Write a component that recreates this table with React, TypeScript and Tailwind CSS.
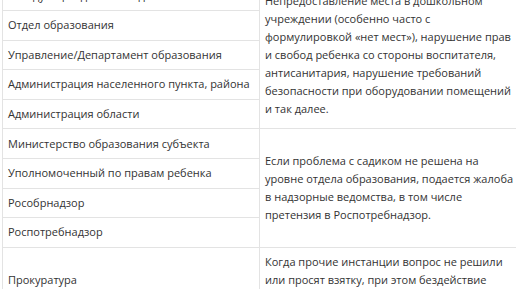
const rows = [
  "Заведующий детским садом",
  "Отдел образования",
  "Управление/Департамент образования",
  "Администрация населенного пункта, района",
  "Администрация области",
  "Министерство образования субъекта",
  "Уполномоченный по правам ребенка",
  "Рособрнадзор",
  "Роспотребнадзор",
  "Прокуратура",
];

const notes: Record<number, { span: number; text: string }> = {
  0: {
    span: 5,
    text: "Непредоставление места в дошкольном учреждении (особенно часто с формулировкой «нет мест»), нарушение прав и свобод ребенка со стороны воспитателя, антисанитария, нарушение требований безопасности при оборудовании помещений и так далее.",
  },
  5: {
    span: 4,
    text: "Если проблема с садиком не решена на уровне отдела образования, подается жалоба в надзорные ведомства, в том числе претензия в Роспотребнадзор.",
  },
  9: {
    span: 1,
    text: "Когда прочие инстанции вопрос не решили или просят взятку, при этом бездействие должностных лиц очевидно.",
  },
};

export default function App() {
  return (
    <div
      className="h-[289px] w-[516px] overflow-hidden bg-white text-[11px] leading-[18px] text-[#333]"
      style={{ fontFamily: "'Open Sans', 'Noto Sans', sans-serif" }}
    >
      <table className="ml-[2px] -mt-[19.6px] w-[520px] table-fixed border-collapse">
        <tbody>
          {rows.map((name, i) => (
            <tr key={name}>
              <td className="w-[257px] border border-[#e3e3e3] px-[5px] py-[5.3px] align-middle">
                {name}
              </td>
              {notes[i] && (
                <td
                  rowSpan={notes[i].span}
                  className="border border-[#e3e3e3] px-[5px] py-[5.3px] align-middle"
                >
                  {notes[i].text}
                </td>
              )}
            </tr>
          ))}
        </tbody>
      </table>
    </div>
  );
}
